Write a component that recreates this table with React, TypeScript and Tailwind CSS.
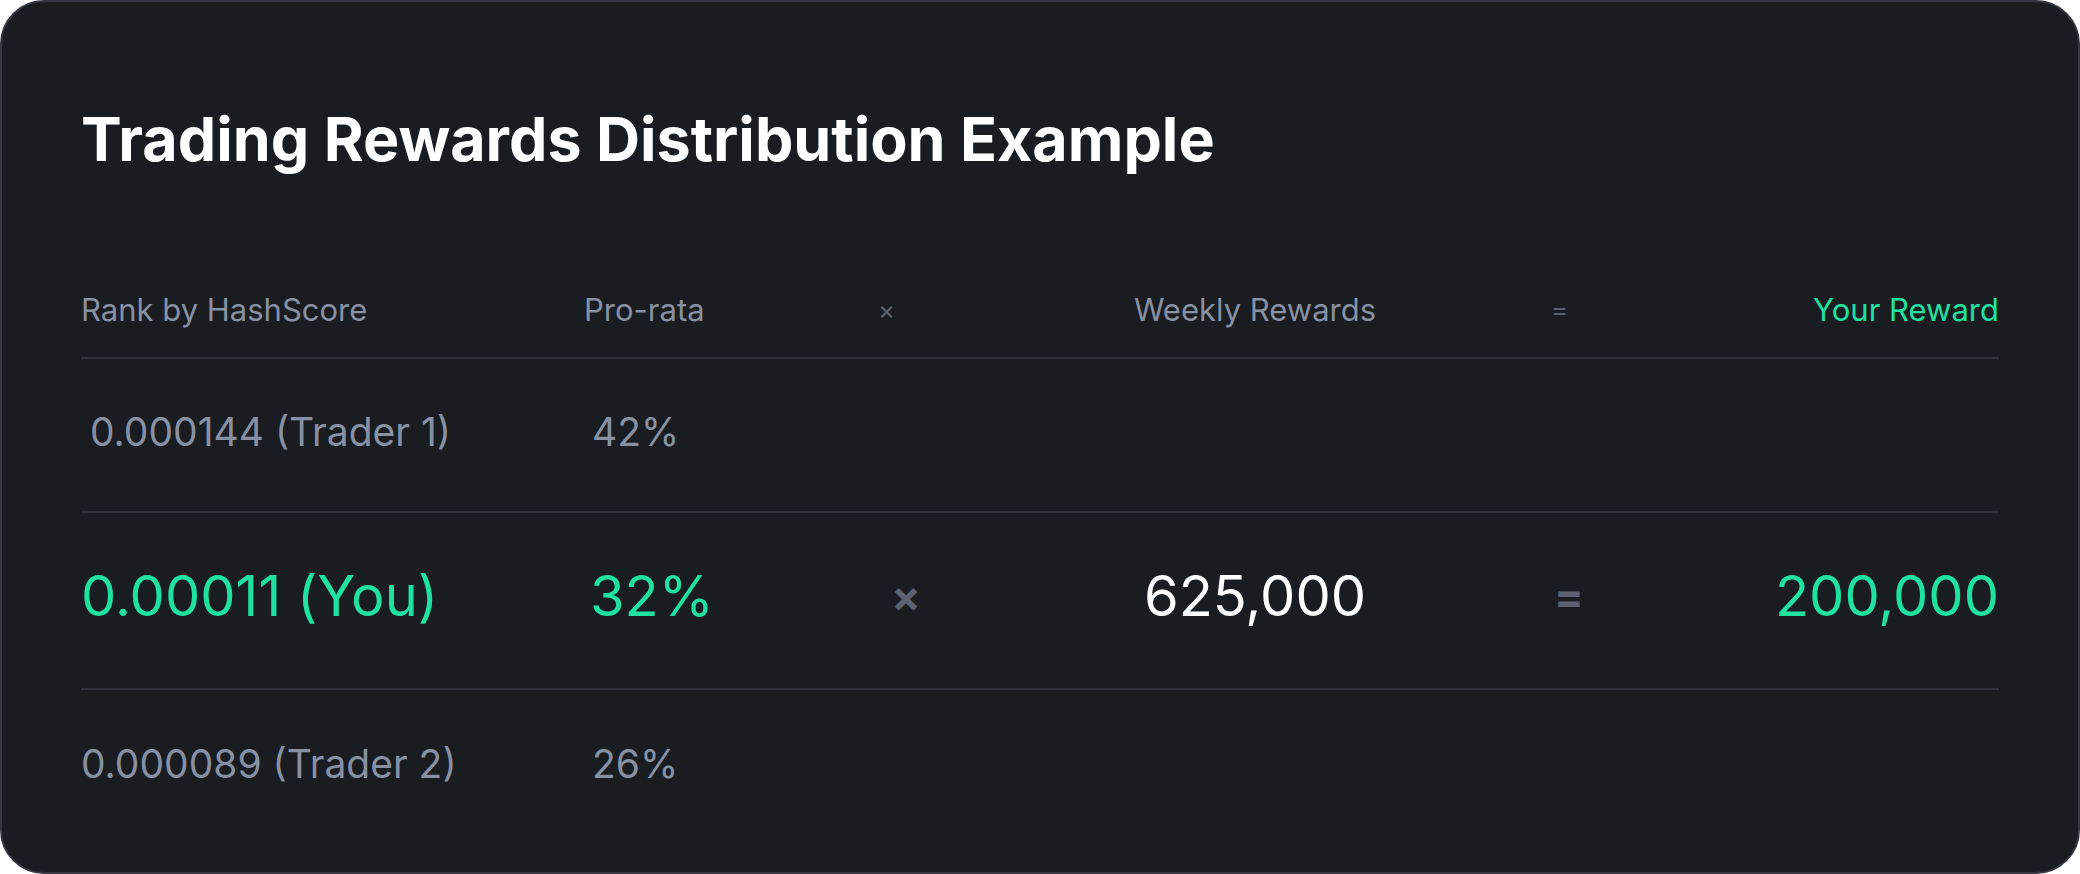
import React from "react";

const font = { fontFamily: "Inter, 'Noto Sans', sans-serif" };

const cols = "grid grid-cols-[503px_294px_122px_510px_190px_299px]";

type Row = {
  rank: string;
  pct: string;
  you?: boolean;
  indent?: boolean;
};

const rows: Row[] = [
  { rank: "0.000144 (Trader 1)", pct: "42%", indent: true },
  { rank: "0.00011 (You)", pct: "32%", you: true },
  { rank: "0.000089 (Trader 2)", pct: "26%" },
];

function HeaderRow() {
  return (
    <div className={cols + " items-center pb-[32px] text-[31px] leading-none text-[#8891a3] border-b-2 border-[#30333c]"}>
      <div>Rank by HashScore</div>
      <div>Pro-rata</div>
      <div className="text-[#5c6271] text-[26px]">×</div>
      <div className="text-center">Weekly Rewards</div>
      <div className="pl-[41px] text-[#5c6271] text-[26px]">=</div>
      <div className="text-right text-[#1fe2a1]">Your Reward</div>
    </div>
  );
}

function TraderRow({ row, last }: { row: Row; last: boolean }) {
  if (row.you) {
    return (
      <div className={cols + " items-start h-[177px] pt-[55px] text-[56px] leading-none border-b-2 border-[#30333c]"}>
        <div className="text-[#1fe2a1]">{row.rank}</div>
        <div className="pl-[6px] text-[#1fe2a1]">{row.pct}</div>
        <div className="h-[56px] flex items-center pl-[13px] text-[#5c6271] text-[44px] font-bold">×</div>
        <div className="text-center text-white">625,000</div>
        <div className="h-[56px] flex items-center pl-[44px] text-[#5c6271] text-[44px] font-bold">=</div>
        <div className="text-right text-[#1fe2a1]">200,000</div>
      </div>
    );
  }
  return (
    <div
      className={
        cols +
        " items-start text-[39px] leading-none text-[#8891a3] " +
        (last ? "flex-1 pt-[54px]" : "h-[154px] pt-[53px] border-b-2 border-[#30333c]")
      }
    >
      <div className={row.indent ? "pl-[9px]" : ""}>{row.rank}</div>
      <div className="pl-[8px]">{row.pct}</div>
      <div />
      <div />
      <div />
      <div />
    </div>
  );
}

export default function App() {
  return (
    <div className="w-[2080px] h-[874px] bg-white" style={font}>
      <div className="flex flex-col w-full h-full rounded-[44px] border-2 border-[#353842] bg-[#191c21] px-[79px] pt-[107px]">
        <h1 className="text-[61px] leading-none font-bold text-white">
          Trading Rewards Distribution Example
        </h1>
        <div className="mt-[124px] flex flex-col flex-1">
          <HeaderRow />
          {rows.map((r, i) => (
            <TraderRow key={i} row={r} last={i === rows.length - 1} />
          ))}
        </div>
      </div>
    </div>
  );
}
